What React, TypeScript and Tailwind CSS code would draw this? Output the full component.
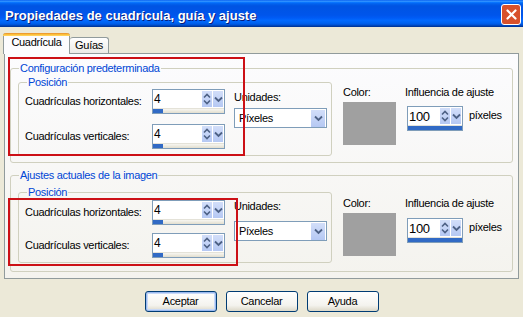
import React from 'react';

const SpinArrows = () => (
  <div className="w-[10px] h-[16px] bg-[linear-gradient(to_bottom,#d2def9,#b5c8f3)] flex items-center justify-center">
    <svg width="8" height="12" viewBox="0 0 8 12">
      <path d="M1 4.5 L4 1.5 L7 4.5 M1 7.5 L4 10.5 L7 7.5" stroke="#4d6185" strokeWidth="1.6" fill="none" />
    </svg>
  </div>
);

const DropButton = ({ w = 'w-[11px]', h = 'h-[16px]' }: { w?: string; h?: string }) => (
  <div className={`${w} ${h} bg-[linear-gradient(to_bottom,#d2def9,#b5c8f3)] border-l border-white flex items-center justify-center`}>
    <svg width="9" height="7" viewBox="0 0 9 7">
      <path d="M1 1.5 L4.5 5 L8 1.5" stroke="#4d6185" strokeWidth="1.8" fill="none" />
    </svg>
  </div>
);

type SpinProps = { value: string; wide?: boolean; full?: boolean };

const Spin = ({ value, wide, full }: SpinProps) => (
  <div className={`${wide ? 'w-[73px]' : 'w-[56px]'} h-[25px] border border-[#7f9db9] bg-white flex flex-col`}>
    <div className="flex-1 flex items-center pr-[1px]">
      <span className={`flex-1 pl-[1px] ${full ? 'text-[13px] tracking-[-0.3px]' : 'text-[12px]'} leading-none text-black`}>{value}</span>
      <SpinArrows />
      <DropButton />
    </div>
    <div className="h-[5px] bg-[linear-gradient(to_bottom,#f7f6f1,#e2dece)] border-t border-[#e4e2d8]">
      <div className={`${full ? 'w-full' : 'w-[10px]'} h-full bg-[#316ac5]`} />
    </div>
  </div>
);

const Select = () => (
  <div className="w-[93px] h-[20px] border border-[#7f9db9] bg-white flex items-center pr-[1px]">
    <span className="flex-1 pl-[4px]">Píxeles</span>
    <DropButton w="w-[15px]" h="h-[17px]" />
  </div>
);

type GroupProps = {
  title: string;
  innerPt: string;
  rowsPt: string;
  rowGap: string;
  innerPb: string;
  outerPb: string;
  unitsPt: string;
  unitsGap: string;
  rightPt: string;
  spinGap: string;
};

const Group = (p: GroupProps) => (
  <fieldset className="border border-[#d0d0bf] rounded-[3px]">
    <legend className="ml-[8px] px-[1px] leading-[13px] text-[#0046d5]">{p.title}</legend>
    <div className={`flex pl-[7px] ${p.innerPt} ${p.outerPb}`}>
      {/* Posición */}
      <fieldset className="w-[314px] border border-[#d0d0bf] rounded-[3px]">
        <legend className="ml-[8px] px-[1px] leading-[13px] text-[#0046d5]">Posición</legend>
        <div className={`flex pl-[6px] ${p.rowsPt} ${p.innerPb}`}>
          <div className={`flex flex-col ${p.rowGap}`}>
            <div className="flex items-center">
              <span className="w-[127px]">Cuadrículas horizontales:</span>
              <Spin value="4" wide />
            </div>
            <div className="flex items-center">
              <span className="w-[127px]">Cuadrículas verticales:</span>
              <Spin value="4" wide />
            </div>
          </div>
          <div className={`ml-[9px] flex flex-col ${p.unitsPt}`}>
            <span>Unidades:</span>
            <div className={p.unitsGap}>
              <Select />
            </div>
          </div>
        </div>
      </fieldset>

      {/* Color */}
      <div className={`ml-[11px] w-[53px] flex flex-col ${p.rightPt}`}>
        <span>Color:</span>
        <div className="mt-[3px] h-[43px] bg-[#a0a0a0]" />
      </div>

      {/* Influencia */}
      <div className={`ml-[9px] flex flex-col ${p.rightPt}`}>
        <span>Influencia de ajuste</span>
        <div className={`flex items-center ml-[2px] ${p.spinGap}`}>
          <Spin value="100" full />
          <span className="ml-[6px] -mt-[6px]">píxeles</span>
        </div>
      </div>
    </div>
  </fieldset>
);

const XpButton = ({ label, def }: { label: string; def?: boolean }) => (
  <button
    className={`w-[72px] h-[21px] rounded-[3px] border border-[#003c74] bg-[linear-gradient(to_bottom,#ffffff,#f4f3ee_70%,#dcd8c8)] text-black ${
      def ? 'shadow-[inset_0_0_0_1px_#9ab9ef,inset_0_0_0_2px_#c8d9f7]' : ''
    }`}
  >
    {label}
  </button>
);

export default function App() {
  return (
    <div className="relative w-[523px] h-[317px] overflow-hidden bg-[#ece9d8] flex flex-col font-['Liberation_Sans',Arial,sans-serif] text-[11px] leading-[13px] tracking-[-0.3px] text-black">
      {/* Title bar */}
      <div className="h-[27px] flex items-center pl-[5px] pr-[2px] bg-[linear-gradient(to_bottom,#0058ee_0%,#3593ff_4%,#288eff_6%,#127dff_8%,#036ffc_10%,#0262ee_14%,#0057e5_20%,#0054e3_24%,#0055eb_56%,#005bf5_66%,#026afe_76%,#0062ef_86%,#0052d6_92%,#0040ab_96%,#003092_100%)]">
        <span className="flex-1 pt-[3px] text-[13px] font-bold tracking-normal text-white [text-shadow:1px_1px_0_#0a1c7a]">
          Propiedades de cuadrícula, guía y ajuste
        </span>
        <div className="w-[20px] h-[21px] mt-[1px] shrink-0 rounded-[3px] border border-white bg-[#d8512c] flex items-center justify-center">
          <svg width="11" height="11" viewBox="0 0 11 11">
            <path d="M1.5 1.5 L9.5 9.5 M9.5 1.5 L1.5 9.5" stroke="#ffffff" strokeWidth="2.2" strokeLinecap="round" />
          </svg>
        </div>
      </div>

      {/* Tabs */}
      <div className="mt-[6px] h-[20px] pl-[3px] flex items-end">
        <div className="relative z-10 w-[67px] h-[21px] -mb-[1px] rounded-t-[3px] border-x border-[#919b9c] bg-[#fcfcfe] flex flex-col">
          <div className="h-[3px] rounded-t-[3px] bg-[linear-gradient(to_bottom,#e68b2c,#ffc83c_60%,#ffd66b)] -mx-[1px]" />
          <span className="text-center pt-0">Cuadrícula</span>
        </div>
        <div className="w-[39px] h-[16px] rounded-t-[3px] border-t border-r border-[#919b9c] bg-[linear-gradient(to_bottom,#ffffff,#ecebe6)] text-center pt-[1px]">
          Guías
        </div>
      </div>

      {/* Tab panel */}
      <div className="mx-[4px] h-[226px] border border-[#919b9c] bg-[linear-gradient(to_bottom,#fcfcfe,#f4f3ee)] px-[5px] pt-[8px]">
        <Group
          title="Configuración predeterminada"
          innerPt="pt-[1px]"
          rowsPt="pt-0"
          rowGap="gap-[10px]"
          innerPb="pb-[6px]"
          outerPb="pb-[6px]"
          unitsPt="pt-[2px]"
          unitsGap="mt-[4px]"
          rightPt="pt-[10px]"
          spinGap="mt-[7px]"
        />
        <div className="mt-[6px]">
          <Group
            title="Ajustes actuales de la imagen"
            innerPt="pt-[4px]"
            rowsPt="pt-[1px]"
            rowGap="gap-[8px]"
            innerPb="pb-[4px]"
            outerPb="pb-[8px]"
            unitsPt="pt-0"
            unitsGap="mt-[8px]"
            rightPt="pt-[11px]"
            spinGap="mt-[8px]"
          />
        </div>
      </div>

      {/* Buttons */}
      <div className="mt-[12px] flex justify-center gap-[9px]">
        <XpButton label="Aceptar" def />
        <XpButton label="Cancelar" />
        <XpButton label="Ayuda" />
      </div>

      {/* Red highlight boxes */}
      <div className="absolute left-[8px] top-[57px] w-[237px] h-[99px] border-2 border-[#cc1016]" />
      <div className="absolute left-[8px] top-[198px] w-[230px] h-[68px] border-2 border-[#cc1016]" />
    </div>
  );
}
